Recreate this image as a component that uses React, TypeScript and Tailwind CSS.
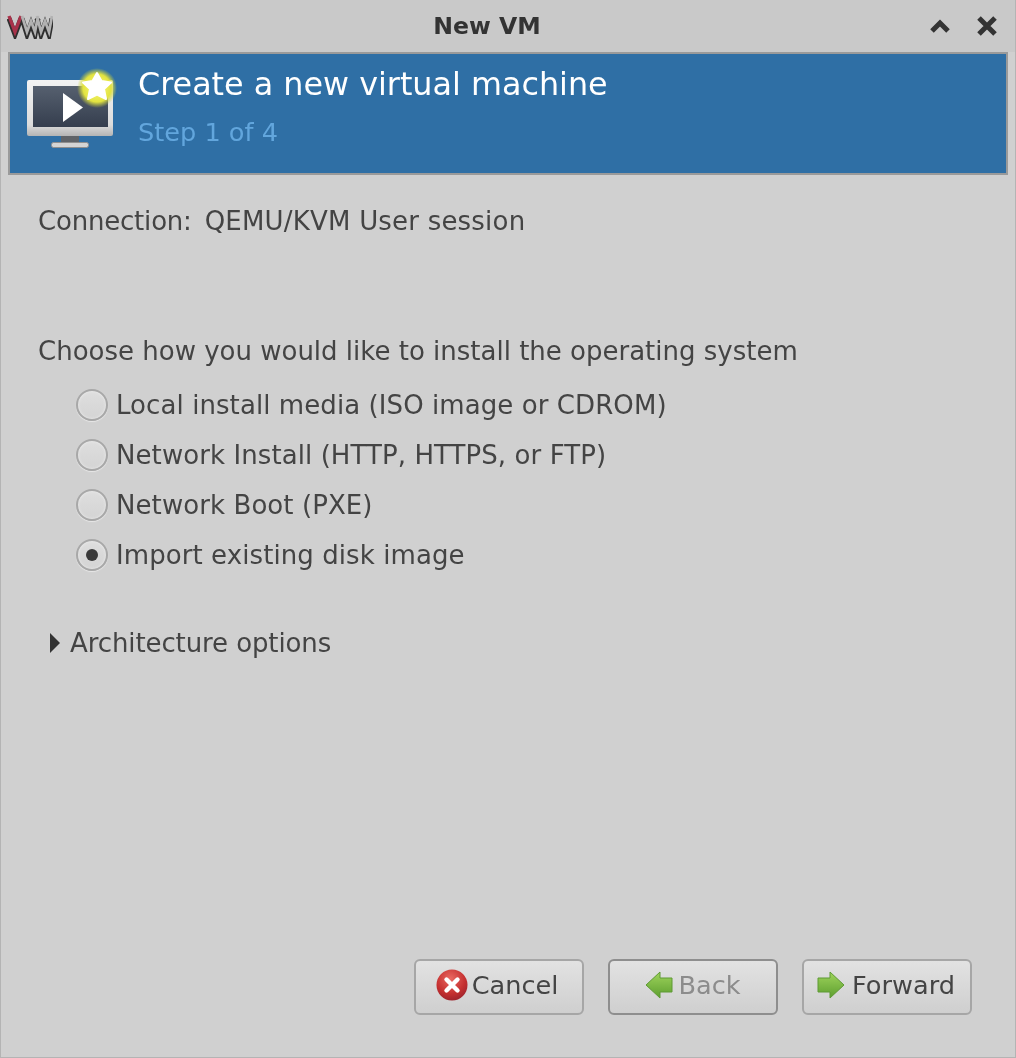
const options = [
  { label: "Local install media (ISO image or CDROM)", checked: false },
  { label: "Network Install (HTTP, HTTPS, or FTP)", checked: false },
  { label: "Network Boot (PXE)", checked: false },
  { label: "Import existing disk image", checked: true },
];

const VmmLogo = () => (
  <svg width="46" height="26" viewBox="0 0 46 26" fill="none">
    <path d="M2 4 L8 20 L14 4 M15 4 L20 20 L24 9 L28 20 L31 4 M30 4 L34 20 L38 9 L42 20 L45 4" stroke="#2f2f2f" strokeWidth="5" transform="translate(0 1.5)" />
    <path d="M2 3 L8 19 L14 3" stroke="#a8324a" strokeWidth="3.4" />
    <path d="M15 3 L20 19 L24 8 L28 19 L31 3 M30 3 L34 19 L38 8 L42 19 L45 3" stroke="#b2b2b2" strokeWidth="2.8" />
  </svg>
);

const MonitorIcon = () => (
  <svg width="96" height="92" viewBox="0 0 96 92" fill="none">
    <defs>
      <linearGradient id="screen" x1="0" y1="0" x2="0" y2="1">
        <stop offset="0" stopColor="#56606f" />
        <stop offset="1" stopColor="#353e4e" />
      </linearGradient>
      <linearGradient id="frame" x1="0" y1="0" x2="0" y2="1">
        <stop offset="0" stopColor="#f2f2f2" />
        <stop offset="0.8" stopColor="#dcdcdc" />
        <stop offset="1" stopColor="#b4b4b4" />
      </linearGradient>
      <radialGradient id="glow">
        <stop offset="0" stopColor="#fdfd80" />
        <stop offset="0.7" stopColor="#e2e340" />
        <stop offset="1" stopColor="#c8d03c" stopOpacity="0" />
      </radialGradient>
    </defs>
    <rect x="34" y="69" width="18" height="6" fill="#5f6368" />
    <rect x="24.5" y="75.5" width="37" height="5" rx="2" fill="#d4d4d4" stroke="#8f8f8f" />
    <rect x="0" y="13" width="86" height="56" rx="2" fill="url(#frame)" />
    <rect x="6" y="19" width="75" height="41" fill="url(#screen)" />
    <path d="M36 26 L56 40.5 L36 55 Z" fill="#ffffff" />
    <circle cx="70" cy="21" r="20" fill="url(#glow)" />
    <path d="M70 6 L74.5 14 L84 15.5 L77 22 L79 32 L70 27.5 L61 32 L63 22 L56 15.5 L65.5 14 Z" fill="#ffffff" stroke="#ffffff" strokeWidth="2" strokeLinejoin="round" />
  </svg>
);

const CancelIcon = () => (
  <svg width="32" height="32" viewBox="0 0 32 32">
    <defs>
      <radialGradient id="red" cx="0.45" cy="0.3" r="0.8">
        <stop offset="0" stopColor="#ea6a62" />
        <stop offset="0.6" stopColor="#c42f2f" />
        <stop offset="1" stopColor="#8f1f2c" />
      </radialGradient>
    </defs>
    <circle cx="16" cy="16" r="15.5" fill="url(#red)" />
    <path d="M10.5 10.5 L21.5 21.5 M21.5 10.5 L10.5 21.5" stroke="#ffffff" strokeWidth="4.4" strokeLinecap="round" />
  </svg>
);

const ArrowIcon = ({ flip }: { flip?: boolean }) => (
  <svg width="28" height="28" viewBox="0 0 28 28" className={flip ? "-scale-x-100" : ""}>
    <defs>
      <linearGradient id={flip ? "greenBack" : "greenFwd"} x1="0" y1="0" x2="0" y2="1">
        <stop offset="0" stopColor="#9fd45c" />
        <stop offset="1" stopColor="#5d9e2f" />
      </linearGradient>
    </defs>
    <path d="M1 7 H13 V1 L27 14 L13 27 V21 H1 Z" fill={`url(#${flip ? "greenBack" : "greenFwd"})`} stroke="#5f9a35" strokeWidth="1" strokeLinejoin="round" />
  </svg>
);

const Radio = ({ checked }: { checked: boolean }) => (
  <span className="flex h-8 w-8 items-center justify-center rounded-full border-2 border-[#a8a8a8] bg-gradient-to-b from-[#dedede] to-[#d4d4d4] shadow-[inset_0_0_3px_#f0f0f0,0_1px_1px_#e8e8e8]">
    {checked && <span className="h-3 w-3 rounded-full bg-[#3a3a3a]" />}
  </span>
);

const Button = ({ children, disabled, spacing }: { children: React.ReactNode; disabled?: boolean; spacing: string }) => (
  <button
    className={`flex h-[56px] w-[170px] items-center justify-center rounded-[6px] border-2 bg-gradient-to-b from-[#e2e2e2] to-[#cfcfcf] pb-[4px] text-[25.6px] ${spacing} ${
      disabled ? "border-[#8e8e8e] text-[#8c8c8c]" : "border-[#a6a6a6] text-[#444444]"
    }`}
  >
    {children}
  </button>
);

export default function App() {
  return (
    <div className="flex h-[1058px] w-[1016px] flex-col overflow-hidden border-x border-b border-[#b4b4b4] bg-[#d0d0d0] font-['DejaVu_Sans',sans-serif] text-[26px] leading-[34px] text-[#444444] blur-[0.6px]">
      {/* Title bar */}
      <div className="flex h-[52px] shrink-0 items-center justify-between bg-[#c9c9c9] pl-[6px] pr-[17px]">
        <VmmLogo />
        <span className="mr-[8px] text-[23.6px] font-bold text-[#333333]">New VM</span>
        <div className="flex items-center gap-[25px]">
          <svg width="22" height="16" viewBox="0 0 22 16" fill="none">
            <path d="M3 13 L11 5 L19 13" stroke="#333333" strokeWidth="5" />
          </svg>
          <svg width="22" height="22" viewBox="0 0 22 22" fill="none">
            <path d="M3 3 L19 19 M19 3 L3 19" stroke="#333333" strokeWidth="5" />
          </svg>
        </div>
      </div>

      {/* Banner */}
      <div className="mx-[7px] flex h-[123px] shrink-0 items-start border-2 border-[#9a9a9a] bg-[#2f6fa5]">
        <div className="ml-[17px] mt-[13px]">
          <MonitorIcon />
        </div>
        <div className="ml-[15px] mt-[10px]">
          <div className="text-[31.8px] leading-[40px] text-white">Create a new virtual machine</div>
          <div className="mt-[12px] text-[25.6px] leading-[32px] text-[#62a6dd]">Step 1 of 4</div>
        </div>
      </div>

      {/* Content */}
      <div className="flex flex-1 flex-col pl-[37px] pr-[43px]">
        <div className="mt-[29px] flex gap-[13px]">
          <span className="tracking-[-0.2px]">Connection:</span>
          <span className="tracking-[0.2px]">QEMU/KVM User session</span>
        </div>

        <div className="mt-[96px]">Choose how you would like to install the operating system</div>

        <div className="mt-[21px] flex flex-col gap-[18px] pl-[38px]">
          {options.map((o) => (
            <label key={o.label} className="flex h-8 items-center gap-[8px]">
              <Radio checked={o.checked} />
              <span className="tracking-[0.08px]">{o.label}</span>
            </label>
          ))}
        </div>

        <div className="mt-[55px] flex items-center gap-[10px] pl-[12px]">
          <svg width="10" height="20" viewBox="0 0 10 20">
            <path d="M0 0 L10 10 L0 20 Z" fill="#333333" />
          </svg>
          <span className="tracking-[-0.1px]">Architecture options</span>
        </div>

        <div className="mb-[42px] mt-auto flex justify-end gap-[24px]">
          <Button spacing="gap-[4px] pr-[4px]">
            <CancelIcon />
            <span>Cancel</span>
          </Button>
          <Button disabled spacing="gap-[5px]">
            <ArrowIcon flip />
            <span>Back</span>
          </Button>
          <Button spacing="gap-[7px] pr-[2px]">
            <ArrowIcon />
            <span>Forward</span>
          </Button>
        </div>
      </div>
    </div>
  );
}
